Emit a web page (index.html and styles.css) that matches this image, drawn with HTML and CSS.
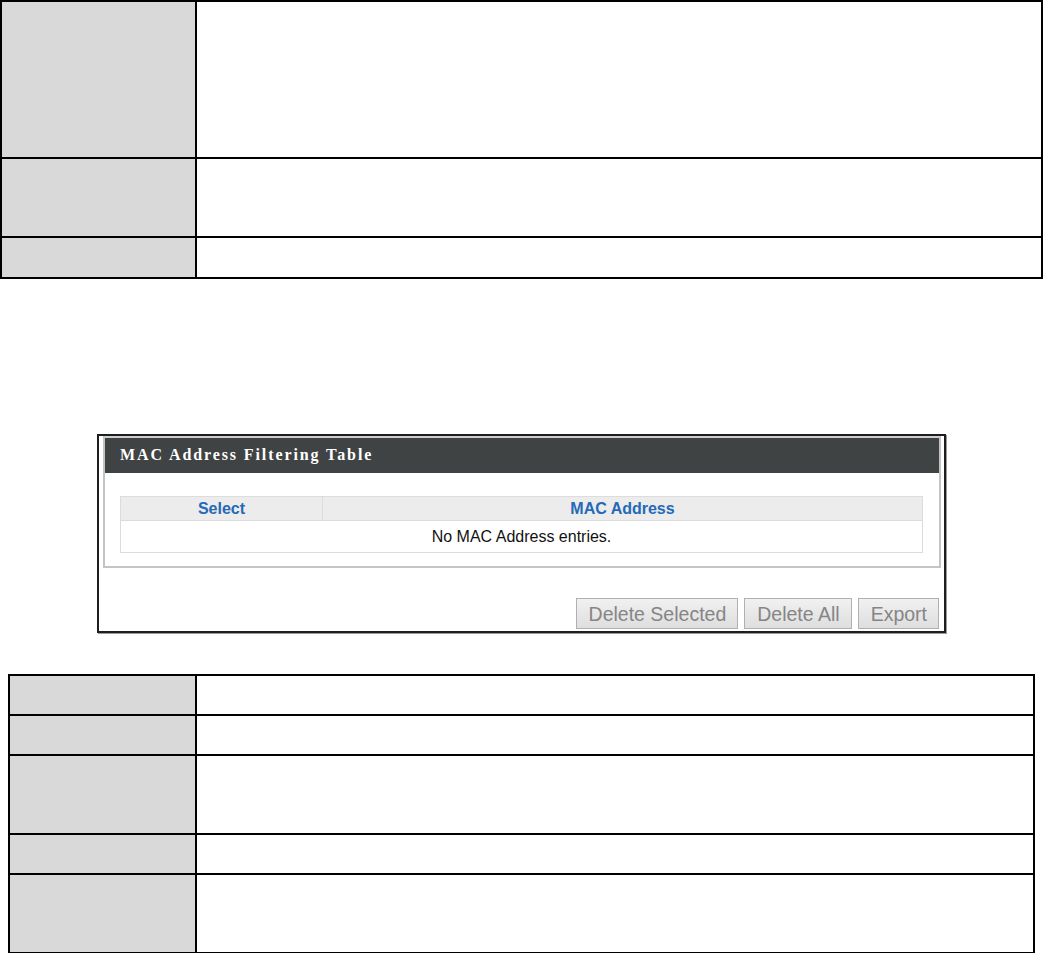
FILE: index.html
```html
<!DOCTYPE html>
<html>
<head>
<meta charset="utf-8">
<link rel="stylesheet" href="styles.css">
</head>
<body>
<div class="spec spec-top">
  <div class="cell key r1"></div><div class="cell val r1"></div>
  <div class="cell key r2"></div><div class="cell val r2"></div>
  <div class="cell key r3"></div><div class="cell val r3"></div>
</div>

<div class="shot">
  <div class="panel">
    <div class="panel-head">MAC Address Filtering Table</div>
    <div class="panel-body">
      <table class="mac">
        <thead>
          <tr><th class="c-sel">Select</th><th>MAC Address</th></tr>
        </thead>
        <tbody>
          <tr><td colspan="2">No MAC Address entries.</td></tr>
        </tbody>
      </table>
    </div>
  </div>
  <div class="actions">
    <button class="btn">Delete Selected</button>
    <button class="btn">Delete All</button>
    <button class="btn">Export</button>
  </div>
</div>

<div class="spec spec-bottom">
  <div class="cell key"></div><div class="cell val"></div>
  <div class="cell key"></div><div class="cell val"></div>
  <div class="cell key"></div><div class="cell val"></div>
  <div class="cell key"></div><div class="cell val"></div>
  <div class="cell key"></div><div class="cell val"></div>
</div>
</body>
</html>
```

FILE: styles.css
```css
* { box-sizing: border-box; }
html, body { margin: 0; padding: 0; background: #fff; }
body { font-family: "Liberation Sans", Arial, sans-serif; width: 1043px; height: 953px; overflow: hidden; }

.spec {
  display: grid;
  border-top: 2px solid #000;
  border-left: 2px solid #000;
}
.cell {
  border-right: 2px solid #000;
  border-bottom: 2px solid #000;
}
.key { background: #d9d9d9; }
.val { background: #fff; }

.spec-top {
  width: 1043px;
  grid-template-columns: 195px 1fr;
  grid-template-rows: 157px 79px 41px;
  height: 279px;
}

.shot {
  margin: 155px 0 0 97px;
  width: 849px;
  height: 199px;
  border: 2px solid #1e1e1e;
  box-shadow: 1px 1px 0 #9a9a9a;
  padding: 0 3px 0 4px;
  display: flex;
  flex-direction: column;
}
.panel {
  border: 2px solid #c4c4c4;
  border-top-color: #cfcfcf;
  background: #fff;
  height: 132px;
}
.panel-head {
  height: 35px;
  background: #3f4344;
  color: #fff;
  font-family: "Liberation Serif", "Times New Roman", serif;
  font-weight: bold;
  font-size: 16px;
  letter-spacing: 1.9px;
  padding: 8px 0 0 15px;
}
.panel-body { padding: 23px 16px 0 15px; }
.mac {
  width: 100%;
  border-collapse: collapse;
  border: 1px solid #dcdcdc;
  font-size: 16px;
}
.mac th {
  background: #ececec;
  color: #2569b7;
  font-weight: bold;
  height: 24px;
  padding: 0;
  line-height: 22px;
  border-bottom: 1px solid #dcdcdc;
}
.mac th.c-sel { width: 202px; border-right: 1px solid #dcdcdc; }
.mac td {
  height: 32px;
  padding: 0;
  text-align: center;
  color: #111;
}

.actions {
  display: flex;
  justify-content: flex-end;
  gap: 6px;
  margin-top: 30px;
  padding-right: 2px;
}
.btn {
  height: 31px;
  padding: 0 11px 0 12px;
  font-family: "Liberation Sans", Arial, sans-serif;
  font-size: 19.5px;
  color: #858585;
  background: linear-gradient(#f1f1f1, #dedede);
  border: 1px solid #b0b0b0;
  border-radius: 0;
  line-height: 28px;
}

.spec-bottom {
  margin: 41px 0 0 8px;
  width: 1027px;
  grid-template-columns: 187px 1fr;
  grid-template-rows: 40px 40px 79px 40px 79px;
}
```
